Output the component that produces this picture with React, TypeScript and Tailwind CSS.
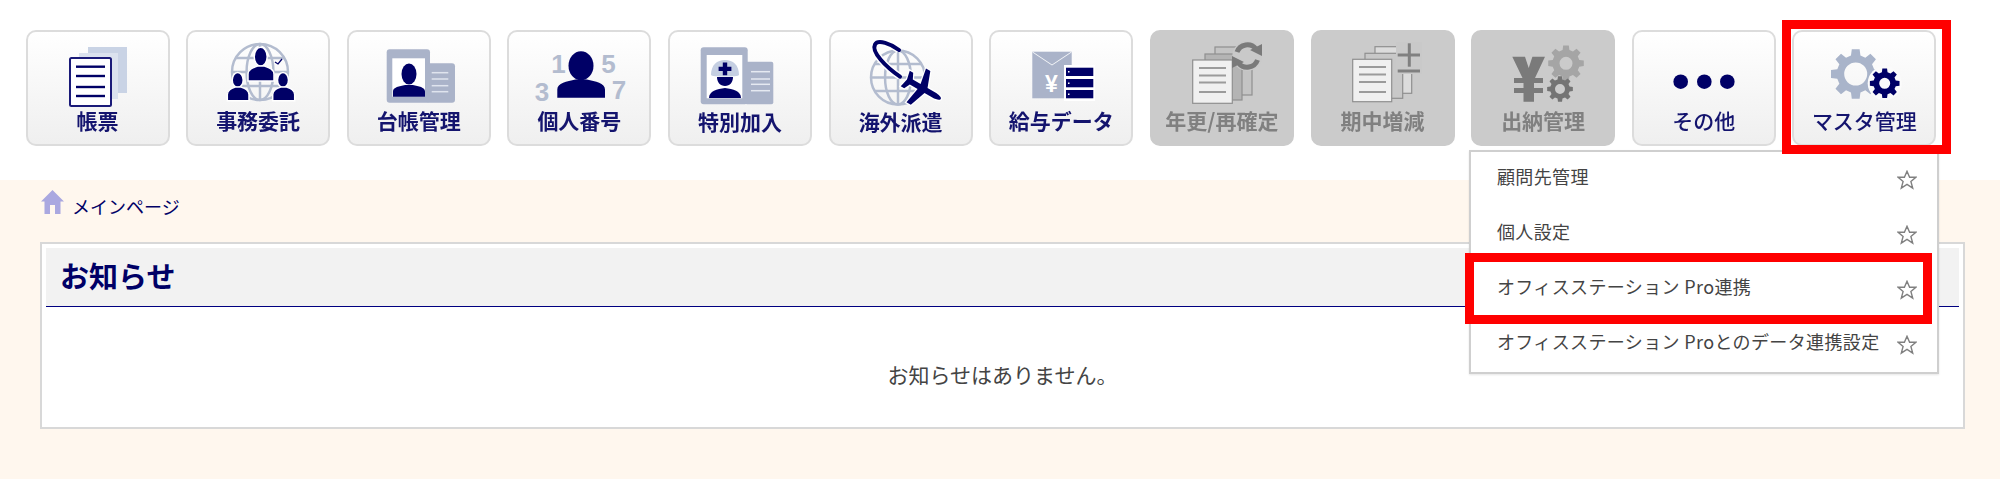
import type { ReactNode } from 'react';
import clsx from 'clsx';

const NAVY = '#000066';
const SLATE = '#aab3c9';
const PALE = '#c5cfe2';

// gear outline with a punched centre, computed from tooth count
function gearPath(cx: number, cy: number, r: number, hole: number, teeth = 8) {
  const inner = r * 0.76;
  const step = (Math.PI * 2) / teeth;
  const pts: string[] = [];
  for (let i = 0; i < teeth; i++) {
    const a = i * step - Math.PI / 2;
    const w = step * 0.2;
    const n = step * 0.32;
    [
      [inner, a - n],
      [r, a - w],
      [r, a + w],
      [inner, a + n],
    ].forEach(([rad, ang]) => {
      pts.push(`${(cx + rad * Math.cos(ang)).toFixed(2)} ${(cy + rad * Math.sin(ang)).toFixed(2)}`);
    });
  }
  const ring = `M${cx - hole} ${cy}a${hole} ${hole} 0 1 0 ${hole * 2} 0a${hole} ${hole} 0 1 0 ${-hole * 2} 0Z`;
  return `M${pts.join('L')}Z${ring}`;
}

function Person({ cx, cy, rx, ry, x, y, w, h }: { cx: number; cy: number; rx: number; ry: number; x: number; y: number; w: number; h: number }) {
  return (
    <g fill={NAVY}>
      <ellipse cx={cx} cy={cy} rx={rx} ry={ry} />
      <path d={`M${x} ${y + h}v${-h * 0.45}c0 ${-h * 0.35} ${w * 0.2} ${-h * 0.45} ${w * 0.38} ${-h * 0.55}h${w * 0.24}c${w * 0.18} ${h * 0.1} ${w * 0.38} ${h * 0.2} ${w * 0.38} ${h * 0.55}v${h * 0.45}Z`} />
    </g>
  );
}

function Lines({ x1, x2, ys, color, width = 1.5 }: { x1: number; x2: number; ys: number[]; color: string; width?: number }) {
  return (
    <g stroke={color} strokeWidth={width}>
      {ys.map((y) => (
        <line key={y} x1={x1} x2={x2} y1={y} y2={y} />
      ))}
    </g>
  );
}

function Globe({ cx, cy, r, width = 2.5 }: { cx: number; cy: number; r: number; width?: number }) {
  return (
    <g fill="none" stroke="#b3bccf" strokeWidth={width}>
      <circle cx={cx} cy={cy} r={r} />
      <ellipse cx={cx} cy={cy} rx={r * 0.48} ry={r} />
      <line x1={cx} x2={cx} y1={cy - r} y2={cy + r} />
      <line x1={cx - r} x2={cx + r} y1={cy} y2={cy} />
      <path d={`M${cx - r * 0.85} ${cy - r * 0.5}H${cx + r * 0.85}M${cx - r * 0.85} ${cy + r * 0.5}H${cx + r * 0.85}`} />
    </g>
  );
}

function Paper({ x, y, w, h, fill, stroke = '#8f8f8f' }: { x: number; y: number; w: number; h: number; fill: string; stroke?: string }) {
  return <rect x={x} y={y} width={w} height={h} fill={fill} stroke={stroke} strokeWidth="1.2" />;
}

const icons: Record<string, ReactNode> = {
  ledger: (
    <>
      <rect x="60" y="15" width="39" height="46" fill="#c9d3e5" />
      <rect x="51" y="21" width="39" height="46" fill="#dbe2ee" />
      <rect x="42" y="26" width="41" height="48" rx="1.5" fill="#fff" stroke="#1a1a78" strokeWidth="2" />
      <Lines x1={48} x2={77} ys={[34.7, 44, 55, 64]} color={NAVY} width={2.4} />
    </>
  ),
  outsource: (
    <>
      <Globe cx={72} cy={40} r={28} />
      <path d="M87 30l3 2 4-5" fill="none" stroke={NAVY} strokeWidth="1.3" />
      <g stroke="#fff" strokeWidth="1.5">
        <Person cx={72.7} cy={24.7} rx={6.5} ry={9.5} x={60} y={34} w={26} h={15} />
        <Person cx={49.7} cy={48} rx={5.5} ry={7.5} x={39.3} y={55} w={21.7} h={13.7} />
        <Person cx={95} cy={48} rx={5.5} ry={7.5} x={84.7} y={55} w={22} h={13.7} />
      </g>
    </>
  ),
  register: (
    <>
      <rect x="37.7" y="17.3" width="43.3" height="53.4" rx="3" fill={SLATE} />
      <rect x="77" y="31.3" width="29" height="39.4" rx="3" fill={SLATE} />
      <rect x="43.3" y="26.3" width="32.7" height="38.4" fill="#fff" />
      <Person cx={60} cy={42} rx={7.5} ry={10.5} x={44} y={53} w={32} h={11.7} />
      <Lines x1={82.7} x2={99.3} ys={[40.7, 47, 53.7, 59.7]} color="#dfe4ee" />
    </>
  ),
  mynumber: (
    <>
      <g fill="#b3bccf" fontFamily="'Liberation Sans', sans-serif" fontWeight="700" fontSize="26" textAnchor="middle">
        <text x="49.5" y="41">1</text>
        <text x="99.5" y="41">5</text>
        <text x="33" y="69">3</text>
        <text x="110" y="67">7</text>
      </g>
      <Person cx={72} cy={33.7} rx={12.5} ry={14.5} x={48.3} y={47.5} w={47.7} h={18.2} />
    </>
  ),
  special: (
    <>
      <rect x="30.7" y="15.3" width="47" height="57" rx="3" fill={SLATE} />
      <rect x="75" y="29.7" width="28.3" height="42.6" rx="2" fill={SLATE} />
      <rect x="36.7" y="23" width="35.6" height="43.3" fill="#fff" />
      <path d="M41 43c0-10 6-15 14-15s14 5 14 15c0 2-28 2-28 0Z" fill={PALE} />
      <path d="M52.8 30.5h4.4v4.2h4.2v4.4h-4.2v4.2h-4.4v-4.2h-4.200v-4.400h4.200Z" fill={NAVY} />
      <path d="M47 45h16c0 5-3 9-8 9s-8-4-8-9Z" fill={NAVY} />
      <path d="M39 66c0-7 8-9 16-10 8 1 16 3 16 10Z" fill={NAVY} />
      <Lines x1={81} x2={100} ys={[39.7, 47, 52.3, 58.7]} color="#e5e9f1" />
    </>
  ),
  overseas: (
    <>
      <Globe cx={67} cy={45.5} r={27} />
      <path d="M69 44.7C55 35 40 20 44 12.5 47 7 60 12 68 18" fill="none" stroke="#fff" strokeWidth="7" />
      <path d="M69 44.7C55 35 40 20 44 12.5 47 7 60 12 68 18" fill="none" stroke={NAVY} strokeWidth="4" strokeLinecap="round" />
      <path
        transform="translate(90.7 56) rotate(30)"
        d="M22 0C22-2 18-3 14-3H5L-1-19H-6L-3-3H-12L-15-9H-19L-17 0-19 9H-15L-12 3H-3L-6 20H-1L5 3H14C18 3 22 2 22 0Z"
        fill={NAVY}
        stroke="#fff"
        strokeWidth="2.500"
        paintOrder="stroke"
      />
    </>
  ),
  payroll: (
    <>
      <rect x="41.3" y="19.7" width="39.4" height="46.6" fill={SLATE} />
      <path d="M41.5 20l19.5 13 19.5-13" fill="none" stroke="#fff" strokeWidth="1" opacity="0.85" />
      <text x="60.5" y="60" textAnchor="middle" fill="#fff" fontFamily="'Liberation Sans', sans-serif" fontWeight="700" fontSize="23">¥</text>
      <rect x="73" y="33" width="31" height="36" fill="#fff" />
      <g fill={NAVY}>
        <rect x="75" y="35.7" width="27.3" height="8.3" />
        <rect x="75" y="47" width="27.3" height="8.3" />
        <rect x="75" y="58" width="27.3" height="8.3" />
      </g>
      <g fill="#fff">
        <rect x="77" y="39" width="1.5" height="1.5" />
        <rect x="77" y="50.5" width="1.5" height="1.5" />
        <rect x="77" y="61.5" width="1.5" height="1.5" />
      </g>
    </>
  ),
  yearend: (
    <>
      <Paper x={63} y={15} w={37} h={48} fill="#c4c4c4" />
      <Paper x={53} y={22} w={37} h={46} fill="#b4b4b4" />
      <Paper x={40.7} y={28} w={39.6} h={43.3} fill="#f0f0f0" />
      <Lines x1={47} x2={74} ys={[36, 43.5, 50.5, 60]} color="#9b9b9b" width={2} />
      <circle cx="95.3" cy="24" r="15" fill="#c9c9c9" />
      <g fill="none" stroke="#7a7a7a" strokeWidth="5">
        <path d="M85 20a11 11 0 0 1 19-3" />
        <path d="M105.500 28a11 11 0 0 1-19 3" />
      </g>
      <path d="M98 18l12 6 0-12ZM92 30l-12-6 0 12Z" fill="#7a7a7a" />
    </>
  ),
  change: (
    <>
      <Paper x={62} y={14.7} w={36.7} h={46.6} fill="#dcdcdc" />
      <Paper x={52} y={21.3} w={37.7} h={45} fill="#c8c8c8" />
      <Paper x={39.7} y={27.3} w={39} h={42.4} fill="#f0f0f0" />
      <Lines x1={46} x2={73} ys={[35, 42.5, 50, 60]} color="#9b9b9b" width={2} />
      <rect x="83" y="10" width="26" height="32" fill="#c9c9c9" />
      <g stroke="#808080" strokeWidth="3">
        <line x1="96.3" x2="96.3" y1="11.3" y2="34.7" />
        <line x1="84.7" x2="107" y1="23" y2="23" />
        <line x1="84.7" x2="107" y1="39" y2="39" />
      </g>
    </>
  ),
  cash: (
    <>
      <path d="M39.300 24.700H52L55.700 36 59.400 24.700H72L62 46H70V51H61V56H70V61H61V69.700H50.500V61H41V56H50.500V51H41V46H49.500Z" fill="#7a7a7a" />
      <path d={gearPath(93, 31.3, 18, 6.5)} fill="#a5a5a5" fillRule="evenodd" />
      <path d={gearPath(87, 57, 13, 5)} fill="#747474" fillRule="evenodd" />
    </>
  ),
  other: (
    <g fill={NAVY}>
      <circle cx="46.7" cy="49.7" r="7.3" />
      <circle cx="70.3" cy="49.7" r="7.3" />
      <circle cx="93.3" cy="49.7" r="7.3" />
    </g>
  ),
  master: (
    <>
      <path d={gearPath(61.7, 42, 25, 11.5)} fill="#a9b4ca" fillRule="evenodd" />
      <circle cx="90.7" cy="51.3" r="17" fill="#fbfbfb" />
      <path d={gearPath(90.7, 51.3, 15, 5.5)} fill={NAVY} fillRule="evenodd" />
    </>
  ),
};

const buttons = [
  { label: '帳票', icon: 'ledger' },
  { label: '事務委託', icon: 'outsource' },
  { label: '台帳管理', icon: 'register' },
  { label: '個人番号', icon: 'mynumber' },
  { label: '特別加入', icon: 'special', low: true },
  { label: '海外派遣', icon: 'overseas', low: true },
  { label: '給与データ', icon: 'payroll' },
  { label: '年更/再確定', icon: 'yearend', disabled: true },
  { label: '期中増減', icon: 'change', disabled: true },
  { label: '出納管理', icon: 'cash', disabled: true },
  { label: 'その他', icon: 'other', light: true },
  { label: 'マスタ管理', icon: 'master', light: true },
];

const menuItems = ['顧問先管理', '個人設定', 'オフィスステーション Pro連携', 'オフィスステーション Proとのデータ連携設定'];

function ToolButton({ label, icon, disabled, light, low }: { label: string; icon: string; disabled?: boolean; light?: boolean; low?: boolean }) {
  return (
    <button
      type="button"
      className={clsx(
        'flex h-[116px] w-[144px] shrink-0 flex-col items-center rounded-[10px] border-2',
        disabled ? 'border-[#cbcbcb] bg-[#cbcbcb]' : 'border-[#dcdcdc] bg-gradient-to-b from-white to-[#efefef]',
      )}
    >
      <svg viewBox="0 0 140 76" className="h-[76px] w-[140px] shrink-0" aria-hidden>
        {icons[icon]}
      </svg>
      <span
        className={clsx(
          'block whitespace-nowrap text-[21px] leading-[24px] blur-[0.4px]',
          low && 'mt-px',
          light ? 'font-medium' : 'font-bold',
          disabled ? 'text-[#808080]' : 'text-[#14146e]',
        )}
      >
        {label}
      </span>
    </button>
  );
}

function StarOutline() {
  return (
    <svg viewBox="0 0 20 20" className="h-5 w-5 shrink-0" aria-hidden>
      <path d="M10 1.3l2.6 6h6.3l-5 4.2 1.8 6.6L10 14.4l-5.700 3.700 1.800-6.600-5-4.200h6.300Z" fill="none" stroke="#808080" strokeWidth="1.4" />
    </svg>
  );
}

export default function App() {
  return (
    <div className="relative flex h-[479px] w-[2000px] flex-col overflow-hidden bg-white font-['Noto_Sans_CJK_JP','Noto_Sans',sans-serif]">
      <header className="flex h-[180px] shrink-0 gap-[16.64px] pl-[25.5px] pt-[30px]">
        {buttons.map((b) => (
          <ToolButton key={b.label} {...b} />
        ))}
      </header>

      <main className="flex flex-1 flex-col bg-[#fff7ee] pl-[40px] pr-[35px]">
        <nav className="flex h-[62px] items-start gap-[8px] pt-[10px] pl-px text-[18px] leading-[32px] text-[#000066]">
          <svg viewBox="0 0 23 24" className="h-6 w-[23px] shrink-0" aria-hidden>
            <path d="M11.500 0L23 11.500h-3.500V24h-5.500v-9h-5v9H3.500V11.500H0Z" fill="#aaa8e0" />
          </svg>
          <span>メインページ</span>
        </nav>

        <section className="flex h-[187px] flex-col border-2 border-[#d8d8d8] bg-white p-[4px]">
          <h2 className="flex h-[59px] shrink-0 items-center border-b border-b-[#000080] bg-[#f2f2f2] pb-[2px] pl-[14px] text-[29px] font-bold text-[#000066]">
            お知らせ
          </h2>
          <p className="pt-[52px] text-center text-[21px] leading-[30px] text-[#444]">お知らせはありません。</p>
        </section>
      </main>

      {/* dropdown lies over the page */}
      <div className="absolute left-[1469px] top-[150px] w-[470px] border-2 border-[#cfcfcf] bg-white shadow-[0_1px_2px_rgba(0,0,0,0.1)]">
        {menuItems.map((item) => (
          <div key={item} className="flex h-[55px] items-center justify-between pl-[26px] pr-[20px] text-[18px] tracking-[0.36px] text-[#444]">
            <span className="-mt-[6px] whitespace-nowrap">{item}</span>
            <StarOutline />
          </div>
        ))}
      </div>

      {/* red annotation frames */}
      <div className="absolute left-[1782px] top-[20px] h-[134px] w-[169px] border-[9px] border-[#ff0000]" />
      <div className="absolute left-[1465px] top-[253px] h-[71px] w-[467px] border-[9px] border-[#ff0000]" />
    </div>
  );
}
